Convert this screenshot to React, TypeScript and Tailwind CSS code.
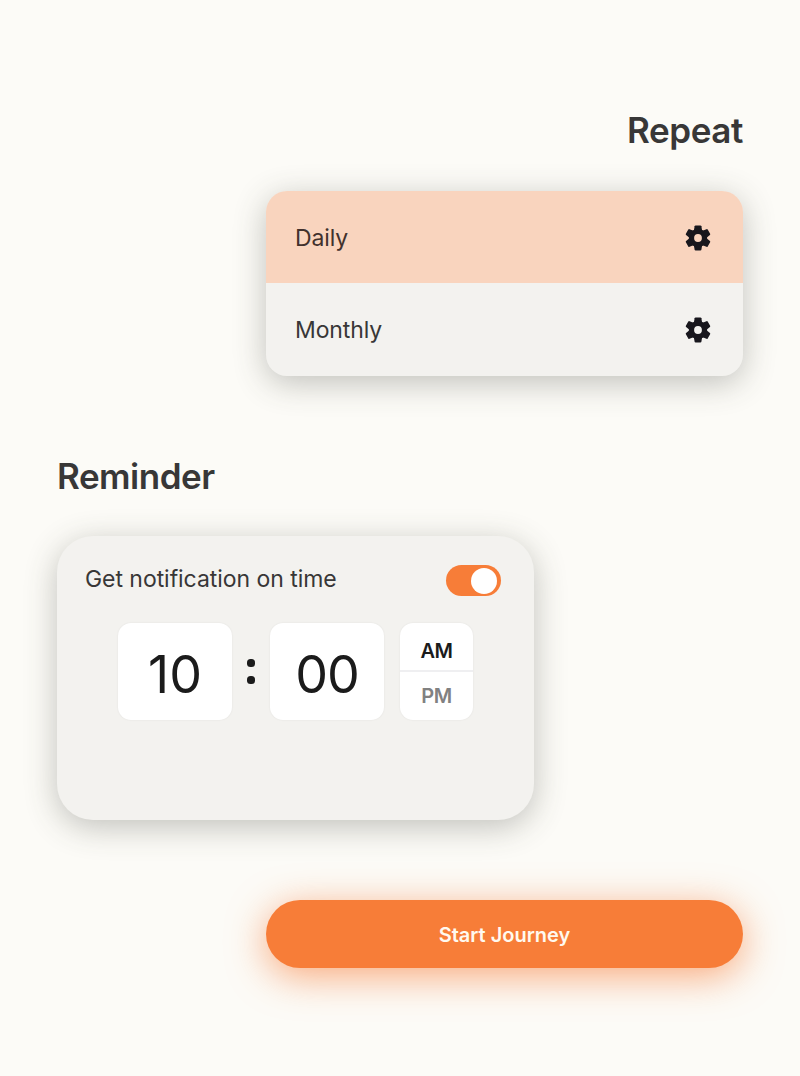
import { useState } from "react";

const toothAngles = [0, 60, 120, 180, 240, 300];

function GearIcon() {
  return (
    <svg width="26" height="26" viewBox="0 0 26 26" fill="#18171d" aria-hidden="true">
      <circle cx="13" cy="13" r="6.55" fill="none" stroke="#18171d" strokeWidth="5.3" />
      {toothAngles.map((angle) => (
        <path
          key={angle}
          transform={`rotate(${angle} 13 13)`}
          d="M8.8 6.2 9.6 1.2Q9.8.4 10.6.4H15.4Q16.2.4 16.4 1.2L17.2 6.2Z"
        />
      ))}
    </svg>
  );
}

const options = ["Daily", "Monthly"];

export default function App() {
  const [repeat, setRepeat] = useState("Daily");
  const [enabled, setEnabled] = useState(true);
  const [period, setPeriod] = useState("AM");

  return (
    <main className="flex h-[1076px] w-[800px] flex-col overflow-hidden bg-[#fcfbf7] px-[57px] pt-[108px] font-['Inter',sans-serif] text-[#383737]">
      <h2 className="self-end text-[35px] leading-[44px] font-semibold tracking-[-0.4px]">Repeat</h2>
      <section className="mt-[39px] flex h-[185px] w-[477px] flex-col self-end overflow-hidden rounded-[21px] bg-[#f3f2ef] shadow-[0_7px_32px_rgba(60,65,55,0.31)]">
        {options.map((option) => (
          <button
            key={option}
            onClick={() => setRepeat(option)}
            className={
              option === repeat
                ? "flex h-[92px] shrink-0 items-center justify-between bg-[#f9d4be] pr-[32px] pl-[29px] pt-[2px] text-[#42312d]"
                : "flex h-[93px] shrink-0 items-center justify-between pr-[32px] pl-[29px] pt-px"
            }
          >
            <span className="text-[23px] leading-7 tracking-[-0.1px]">{option}</span>
            <GearIcon />
          </button>
        ))}
      </section>

      <h2 className="mt-[78px] text-[35px] leading-[44px] font-semibold tracking-[-0.5px]">Reminder</h2>
      <section className="mt-[38px] flex h-[284px] w-[477px] shrink-0 flex-col rounded-[36px] bg-[#f3f2ef] shadow-[0_7px_32px_rgba(60,65,55,0.31)]">
        <div className="mt-7 flex h-8 items-start justify-between pr-[33px] pl-[28px]">
          <span className="pt-px text-[23px] leading-7 tracking-[-0.05px]">Get notification on time</span>
          <button
            aria-label="Toggle notification"
            onClick={() => setEnabled(!enabled)}
            className={
              enabled
                ? "mt-px flex h-[31px] w-[55px] items-center justify-end rounded-full bg-[#f77d38] pr-1"
                : "mt-px flex h-[31px] w-[55px] items-center justify-start rounded-full bg-gray-300 pl-1"
            }
          >
            <span className="size-[26px] rounded-full bg-white" />
          </button>
        </div>
        <div className="mt-[27px] ml-[61px] flex h-[97px] text-[#1b1b1b]">
          <div className="flex w-[114px] items-center justify-center rounded-[13px] bg-white pt-[7px] text-[52px] leading-none shadow-[0_0_2px_rgba(0,0,0,0.08)]">10</div>
          <div className="flex w-[38px] flex-col items-center justify-center gap-[9px]">
            <span className="size-[8px] rounded-[3.5px] bg-[#1b1b1b]" />
            <span className="size-[8px] rounded-[3.5px] bg-[#1b1b1b]" />
          </div>
          <div className="flex w-[114px] items-center justify-center rounded-[13px] bg-white pt-[7px] text-[52px] leading-none tracking-[-1px] shadow-[0_0_2px_rgba(0,0,0,0.08)]">00</div>
          <div className="ml-4 flex w-[73px] flex-col overflow-hidden rounded-[13px] bg-white text-[20px] font-semibold tracking-[-0.4px] shadow-[0_0_2px_rgba(0,0,0,0.08)]">
            <button
              onClick={() => setPeriod("AM")}
              className={period === "AM" ? "h-[49px] border-b-2 border-[#efeff1] pt-[9px] leading-none" : "h-[49px] border-b-2 border-[#efeff1] pt-[9px] leading-none text-[#818181]"}
            >
              AM
            </button>
            <button
              onClick={() => setPeriod("PM")}
              className={period === "PM" ? "h-[48px] leading-none" : "h-[48px] leading-none text-[#818181]"}
            >
              PM
            </button>
          </div>
        </div>
      </section>

      <button className="mt-[80px] h-[68px] w-[477px] shrink-0 self-end rounded-full bg-[#f77d38] pt-[2px] text-[20px] font-semibold text-[#fff9ef] shadow-[0_8px_38px_rgba(247,125,56,0.65)]">
        Start Journey
      </button>
    </main>
  );
}
